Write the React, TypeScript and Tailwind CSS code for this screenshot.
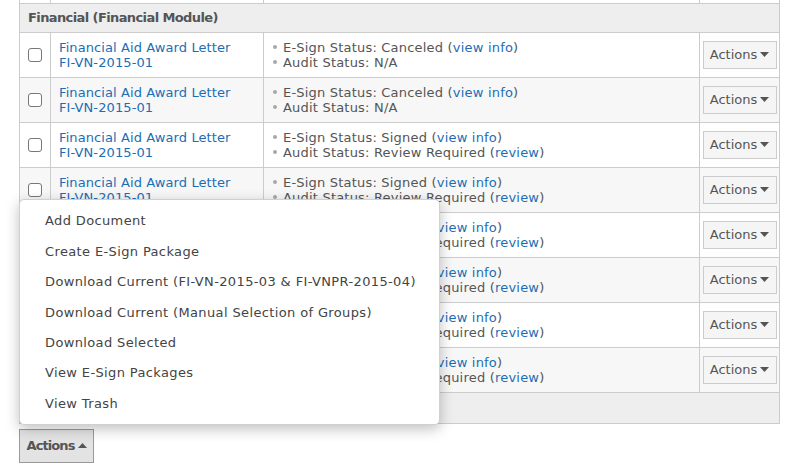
import React from "react";

const rows = [
  { esign: "Canceled", audit: "N/A", review: false },
  { esign: "Canceled", audit: "N/A", review: false },
  { esign: "Signed", audit: "Review Required", review: true },
  { esign: "Signed", audit: "Review Required", review: true },
  { esign: "Signed", audit: "Review Required", review: true },
  { esign: "Signed", audit: "Review Required", review: true },
  { esign: "Signed", audit: "Review Required", review: true },
  { esign: "Signed", audit: "Review Required", review: true },
];

const menu = [
  "Add Document",
  "Create E-Sign Package",
  "Download Current (FI-VN-2015-03 & FI-VNPR-2015-04)",
  "Download Current (Manual Selection of Groups)",
  "Download Selected",
  "View E-Sign Packages",
  "View Trash",
];

function Caret({ up }: { up?: boolean }) {
  return (
    <svg width="9" height="5" viewBox="0 0 9 5" className="ml-[3px]">
      {up ? <path d="M0 5 L4.5 0 L9 5 Z" fill="#555" /> : <path d="M0 0 L9 0 L4.5 5 Z" fill="#555" />}
    </svg>
  );
}

export default function App() {
  return (
    <div
      className="relative w-[793px] h-[476px] bg-white overflow-hidden text-[13px] text-[#555]"
      style={{ fontFamily: '"DejaVu Sans", Verdana, sans-serif' }}
    >
      <div className="ml-[19px] w-[760px]">
        <table className="w-full border-collapse table-fixed">
          <colgroup>
            <col className="w-[31px]" />
            <col className="w-[213px]" />
            <col className="w-[436px]" />
            <col className="w-[80px]" />
          </colgroup>
          <tbody>
            <tr className="h-[3px]">
              <td className="border-x border-b border-[#ccc] p-0"></td>
              <td className="border-x border-b border-[#ccc] p-0"></td>
              <td className="border-x border-b border-[#ccc] p-0"></td>
              <td className="border-x border-b border-[#ccc] p-0"></td>
            </tr>
            <tr className="h-[29px] bg-[#eeeeee]">
              <td colSpan={4} className="border border-[#ccc] px-[8px] font-bold text-[#555] leading-[15px] tracking-[-0.6px]">
                Financial (Financial Module)
              </td>
            </tr>
            {rows.map((r, i) => (
              <tr key={i} className={`h-[45px] ${i % 2 === 0 ? "bg-white" : "bg-[#f7f7f7]"}`}>
                <td className="border border-[#ccc] p-0 align-middle">
                  <div className="flex justify-center">
                    <div className="w-[14px] h-[14px] rounded-[3px] border border-[#777] bg-white" />
                  </div>
                </td>
                <td className="border border-[#ccc] px-[8px] py-[7px] leading-[15px] align-middle tracking-[0.1px]">
                  <div className="text-[#1b6eb5]">Financial Aid Award Letter</div>
                  <div className="text-[#1b6eb5]">FI-VN-2015-01</div>
                </td>
                <td className="border border-[#ccc] pl-[9px] pr-[6px] py-[7px] leading-[15px] align-middle tracking-[0.2px]">
                  <div className="flex items-center">
                    <span className="w-[4px] h-[4px] rounded-full bg-[#a8a8a8] mr-[6px] shrink-0" />
                    <span>
                      E-Sign Status: {r.esign} (<span className="text-[#1b6eb5]">view info</span>)
                    </span>
                  </div>
                  <div className="flex items-center">
                    <span className="w-[4px] h-[4px] rounded-full bg-[#a8a8a8] mr-[6px] shrink-0" />
                    <span>
                      Audit Status: {r.audit}
                      {r.review && (
                        <>
                          {" "}(<span className="text-[#1b6eb5]">review</span>)
                        </>
                      )}
                    </span>
                  </div>
                </td>
                <td className="border border-[#ccc] p-0 align-middle">
                  <div className="flex justify-center">
                    <div className="flex items-center justify-center w-[74px] h-[28px] border border-[#ccc] bg-[#f5f5f5] text-[#555]">
                      Actions
                      <Caret />
                    </div>
                  </div>
                </td>
              </tr>
            ))}
            <tr className="h-[31px] bg-[#eeeeee]">
              <td colSpan={4} className="border border-[#ccc] p-0"></td>
            </tr>
          </tbody>
        </table>
        <div className="mt-[5px] flex items-center justify-center w-[75px] h-[34px] border border-[#999] bg-[#e3e3e3] font-bold text-[#555] tracking-[-0.9px]">
          Actions
          <Caret up />
        </div>
      </div>

      <div className="absolute left-[19px] top-[199px] w-[421px] h-[226px] bg-white rounded-[5px] border border-[#d0d0d0] shadow-[0_4px_14px_rgba(0,0,0,0.25)] pt-[6px] tracking-[0.37px]">
        {menu.map((m) => (
          <div key={m} className="h-[30.4px] flex items-center pl-[25px] text-[#444]">
            {m}
          </div>
        ))}
      </div>
    </div>
  );
}
